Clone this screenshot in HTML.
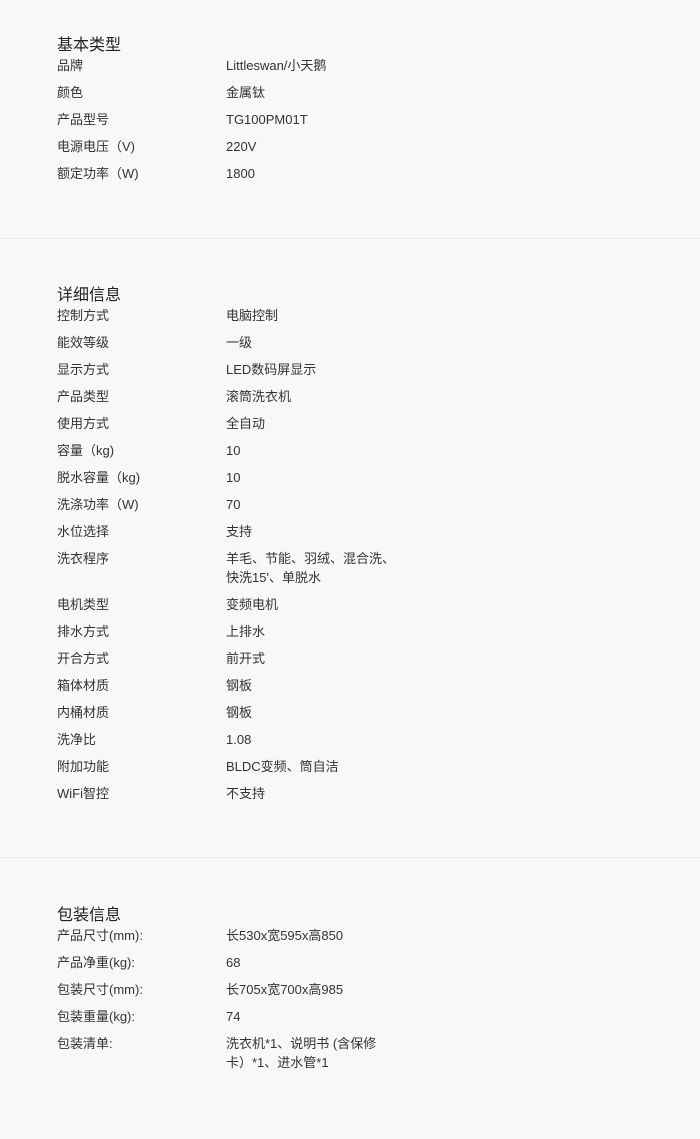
<!DOCTYPE html>
<html><head><meta charset="utf-8"><style>
body{margin:0;width:700px;height:1139px;background:#f8f8f8;font-family:"Liberation Sans","Noto Sans CJK SC",sans-serif;color:#333;position:relative;overflow:hidden}
.sec{position:absolute;left:57px;width:600px}
.t{font-size:16px;line-height:20px;color:#222}
.r{display:flex;font-size:13px;line-height:19px;min-height:27px}
.r .k{width:169px}
.r .v{width:300px;white-space:nowrap}
.hr{position:absolute;left:0;width:700px;height:1px;background:#e9e9e9}
</style></head><body>
<div class="sec" style="top:36px">
<div class="t">基本类型</div>
<div>
<div class="r"><div class="k">品牌</div><div class="v">Littleswan/小天鹅</div></div>
<div class="r"><div class="k">颜色</div><div class="v">金属钛</div></div>
<div class="r"><div class="k">产品型号</div><div class="v">TG100PM01T</div></div>
<div class="r"><div class="k">电源电压（V)</div><div class="v">220V</div></div>
<div class="r"><div class="k">额定功率（W)</div><div class="v">1800</div></div>
</div></div>
<div class="hr" style="top:238px"></div>
<div class="sec" style="top:286px">
<div class="t">详细信息</div>
<div>
<div class="r"><div class="k">控制方式</div><div class="v">电脑控制</div></div>
<div class="r"><div class="k">能效等级</div><div class="v">一级</div></div>
<div class="r"><div class="k">显示方式</div><div class="v">LED数码屏显示</div></div>
<div class="r"><div class="k">产品类型</div><div class="v">滚筒洗衣机</div></div>
<div class="r"><div class="k">使用方式</div><div class="v">全自动</div></div>
<div class="r"><div class="k">容量（kg)</div><div class="v">10</div></div>
<div class="r"><div class="k">脱水容量（kg)</div><div class="v">10</div></div>
<div class="r"><div class="k">洗涤功率（W)</div><div class="v">70</div></div>
<div class="r"><div class="k">水位选择</div><div class="v">支持</div></div>
<div class="r" style="min-height:46px"><div class="k">洗衣程序</div><div class="v">羊毛、节能、羽绒、混合洗、<br>快洗15'、单脱水</div></div>
<div class="r"><div class="k">电机类型</div><div class="v">变频电机</div></div>
<div class="r"><div class="k">排水方式</div><div class="v">上排水</div></div>
<div class="r"><div class="k">开合方式</div><div class="v">前开式</div></div>
<div class="r"><div class="k">箱体材质</div><div class="v">钢板</div></div>
<div class="r"><div class="k">内桶材质</div><div class="v">钢板</div></div>
<div class="r"><div class="k">洗净比</div><div class="v">1.08</div></div>
<div class="r"><div class="k">附加功能</div><div class="v">BLDC变频、筒自洁</div></div>
<div class="r"><div class="k">WiFi智控</div><div class="v">不支持</div></div>
</div></div>
<div class="hr" style="top:857px"></div>
<div class="sec" style="top:906px">
<div class="t">包装信息</div>
<div>
<div class="r"><div class="k">产品尺寸(mm):</div><div class="v">长530x宽595x高850</div></div>
<div class="r"><div class="k">产品净重(kg):</div><div class="v">68</div></div>
<div class="r"><div class="k">包装尺寸(mm):</div><div class="v">长705x宽700x高985</div></div>
<div class="r"><div class="k">包装重量(kg):</div><div class="v">74</div></div>
<div class="r" style="min-height:46px"><div class="k">包装清单:</div><div class="v">洗衣机*1、说明书 (含保修<br>卡）*1、进水管*1</div></div>
</div></div>
</body></html>
